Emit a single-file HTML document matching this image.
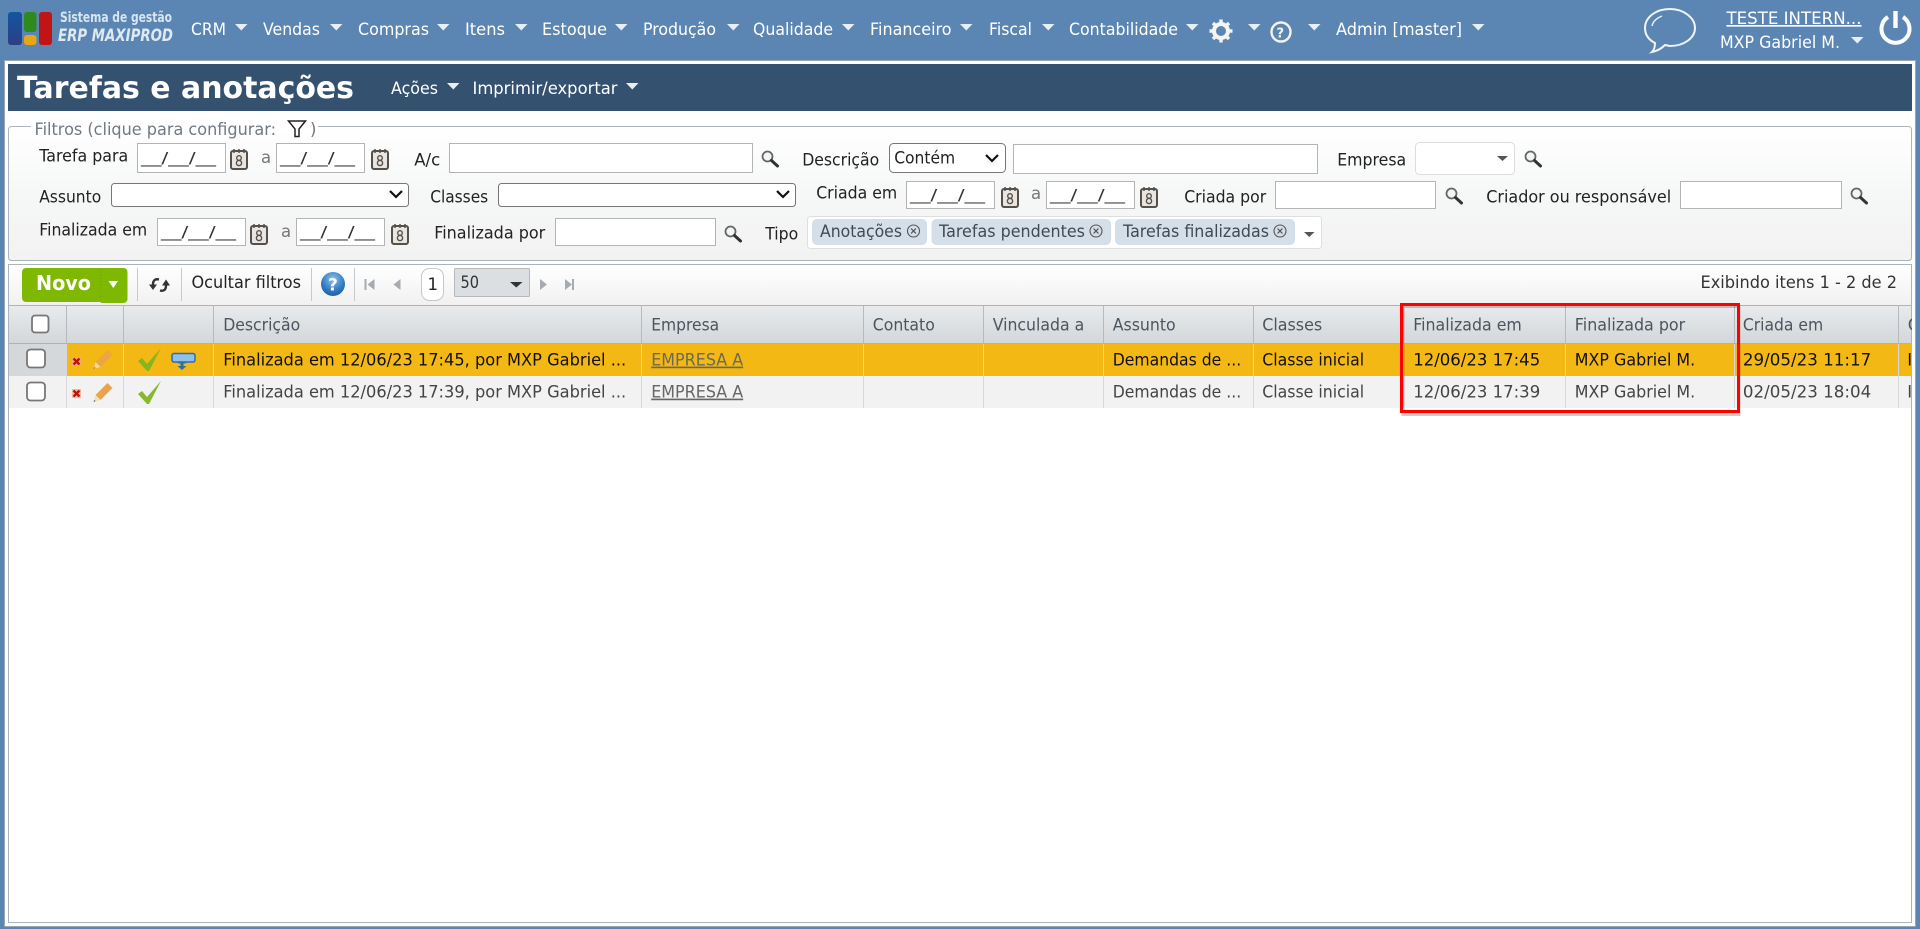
<!DOCTYPE html>
<html lang="pt-BR"><head><meta charset="utf-8"><title>Tarefas e anotações</title>
<style>
html,body{margin:0;padding:0;background:#fff;width:1920px;height:929px;overflow:hidden}
svg{display:block}
text{font-family:"DejaVu Sans","Liberation Sans",sans-serif;font-size:16.5px;fill:#333;white-space:pre}
.m{fill:#fff}
.l{fill:#222;transform:translate(-.8px,-.4px)}
.h{fill:#4b5560;transform:translate(-.8px,-.4px)}
.r1{fill:#111;transform:translate(-.8px,-.4px)}
.r2{fill:#444;transform:translate(-.8px,-.4px)}
.mask{fill:#333;font-size:15px;transform:translateX(-1px)}
</style></head><body>
<svg xmlns="http://www.w3.org/2000/svg" width="1920" height="929" viewBox="0 0 1920 929">
<defs>
<linearGradient id="gf" x1="0" y1="0" x2="0" y2="1"><stop offset="0" stop-color="#fff"/><stop offset=".5" stop-color="#f6f7f7"/><stop offset="1" stop-color="#f2f2f2"/></linearGradient>
<linearGradient id="gt" x1="0" y1="0" x2="0" y2="1"><stop offset="0" stop-color="#fff"/><stop offset="1" stop-color="#f1f1f1"/></linearGradient>
<linearGradient id="gh" x1="0" y1="0" x2="0" y2="1"><stop offset="0" stop-color="#e9ebed"/><stop offset="1" stop-color="#d3d7da"/></linearGradient>
<linearGradient id="lb" x1="0" y1="0" x2="0" y2="1"><stop offset="0" stop-color="#14559f"/><stop offset="1" stop-color="#2c3f86"/></linearGradient>
<radialGradient id="gq" cx=".5" cy=".3" r=".8"><stop offset="0" stop-color="#8fc0ea"/><stop offset=".6" stop-color="#2f79c2"/><stop offset="1" stop-color="#1a5596"/></radialGradient>
<path id="car" d="M0 0h12.500l-6.200 6.500z" fill="#e8eef4"/>
<g id="cal"><rect x="1" y="2" width="16" height="18" rx="2" fill="#e9e6e2" stroke="#55504c" stroke-width="2"/><path d="M4 0v4M9 0v4M14 0v4" stroke="#55504c" stroke-width="1.500"/><circle cx="9" cy="9" r="2.300" fill="none" stroke="#55504c" stroke-width="1.400"/><circle cx="9" cy="14" r="2.600" fill="none" stroke="#55504c" stroke-width="1.400"/></g>
<g id="sr"><circle cx="6.500" cy="6.500" r="5" fill="#f2f5f7" stroke="#666" stroke-width="1.800"/><path d="M10.500 10.500l6 5.500" stroke="#333" stroke-width="3" stroke-linecap="round"/></g>
<g id="xi"><rect x="0" y="0" width="9" height="9" fill="#e8b080" opacity=".75"/><path d="M1.500 1.500l6 6M7.500 1.500l-6 6" stroke="#c01212" stroke-width="2.400"/></g>
<g id="pen"><path d="M3 13L15 1l5 5L8 18z" fill="#e9a24d"/><path d="M3 13l5 5-7 2z" fill="#f6dfb9"/><path d="M1 20l2-1-1-1z" fill="#444"/></g>
<g id="chk"><path d="M0 13l4-3 5 6L23 0 11 23h-2z" fill="#7fb520" opacity=".95"/></g>
<g id="cc"><circle cx="0" cy="0" r="6" fill="none" stroke="#555" stroke-width="1.100"/><path d="M-2.400-2.400l4.800 4.800M2.400-2.400l-4.800 4.800" stroke="#555" stroke-width="1.200"/></g>
<path id="chev" d="M0 0l6 6 6-6" fill="none" stroke="#111" stroke-width="2.200"/>
<clipPath id="clipT"><rect x="8" y="300" width="1904" height="120"/></clipPath>
</defs>

<rect width="1920" height="929" fill="#5b86b3"/>
<rect x="4.500" y="60.500" width="1911" height="866" fill="#fff" stroke="#9aa6b0"/>

<!-- logo -->
<rect x="8" y="12" width="14" height="33" rx="3" fill="url(#lb)"/>
<rect x="24" y="12" width="12.500" height="20" rx="3" fill="#2e8a1e"/>
<rect x="24" y="35" width="12.500" height="10" rx="3" fill="#e5a718"/>
<rect x="39" y="12" width="13" height="33" rx="3" fill="#c11414"/>
<text x="60" y="22" textLength="112" lengthAdjust="spacingAndGlyphs" style="font-size:14px;font-weight:bold;fill:#d8e4ef">Sistema de gestão</text>
<text x="58" y="41" textLength="115" lengthAdjust="spacingAndGlyphs" style="font-size:16.500px;font-weight:bold;font-style:italic;fill:#dfe9f2">ERP MAXIPROD</text>

<!-- menu -->
<g>
<text class="m" x="191" y="35" textLength="35" lengthAdjust="spacingAndGlyphs">CRM</text><use href="#car" x="235" y="24"/>
<text class="m" x="263" y="35" textLength="57" lengthAdjust="spacingAndGlyphs">Vendas</text><use href="#car" x="330" y="24"/>
<text class="m" x="358" y="35" textLength="71" lengthAdjust="spacingAndGlyphs">Compras</text><use href="#car" x="437" y="24"/>
<text class="m" x="465" y="35" textLength="40" lengthAdjust="spacingAndGlyphs">Itens</text><use href="#car" x="515" y="24"/>
<text class="m" x="542" y="35" textLength="65" lengthAdjust="spacingAndGlyphs">Estoque</text><use href="#car" x="615" y="24"/>
<text class="m" x="643" y="35" textLength="73" lengthAdjust="spacingAndGlyphs">Produção</text><use href="#car" x="727" y="24"/>
<text class="m" x="753" y="35" textLength="80" lengthAdjust="spacingAndGlyphs">Qualidade</text><use href="#car" x="842" y="24"/>
<text class="m" x="870" y="35" textLength="81.500" lengthAdjust="spacingAndGlyphs">Financeiro</text><use href="#car" x="960" y="24"/>
<text class="m" x="989" y="35" textLength="43" lengthAdjust="spacingAndGlyphs">Fiscal</text><use href="#car" x="1042" y="24"/>
<text class="m" x="1069" y="35" textLength="109" lengthAdjust="spacingAndGlyphs">Contabilidade</text><use href="#car" x="1186" y="24"/>
<g transform="translate(1221 31)"><circle r="7" fill="none" stroke="#f4f4f0" stroke-width="4"/><path d="M0-11.500V-7M0 7V11.500M-11.500 0H-7M7 0H11.500M-8-8l3 3M5 5l3 3M8-8l-3 3M-5 5l-3 3" stroke="#f4f4f0" stroke-width="3.400"/></g>
<use href="#car" x="1248" y="24"/>
<circle cx="1281" cy="32" r="9.500" fill="none" stroke="#f2f2f2" stroke-width="2.400"/>
<text x="1276.500" y="37.500" style="font-size:13px;font-weight:bold;fill:#f2f2f2">?</text>
<use href="#car" x="1308" y="24"/>
<text class="m" x="1336" y="35" textLength="126" lengthAdjust="spacingAndGlyphs">Admin [master]</text><use href="#car" x="1472" y="24"/>
</g>
<!-- chat -->
<path d="M1670 9c-14 0-25 8-25 19 0 7 4 12 10 15 0 3-1 7-3 9 5-1 10-4 13-7 2 0 3 1 5 1 14 0 25-8 25-18s-11-19-25-19z" fill="none" stroke="#eef3f8" stroke-width="2"/>
<path d="M1652 26c1-5 5-8 10-10" fill="none" stroke="#eef3f8" stroke-width="1.400"/>
<text class="m" x="1726.500" y="24" textLength="135" lengthAdjust="spacingAndGlyphs" text-decoration="underline">TESTE INTERN...</text>
<text class="m" x="1720" y="48" textLength="120" lengthAdjust="spacingAndGlyphs">MXP Gabriel M.</text><use href="#car" x="1851" y="37"/>
<path d="M1888 17a14 14 0 1 0 15 0" fill="none" stroke="#fff" stroke-width="4"/><path d="M1895.500 11v17" stroke="#fff" stroke-width="4.400"/>

<!-- title bar -->
<rect x="8" y="64" width="1904" height="47" fill="#34526f"/>
<text x="17" y="98" textLength="337" lengthAdjust="spacingAndGlyphs" style="font-size:30px;font-weight:bold;fill:#fff">Tarefas e anotações</text>
<text class="m" x="391" y="94" textLength="47" lengthAdjust="spacingAndGlyphs">Ações</text><use href="#car" x="447" y="83"/>
<text class="m" x="472.500" y="94" textLength="145" lengthAdjust="spacingAndGlyphs">Imprimir/exportar</text><use href="#car" x="626" y="83"/>

<!-- filter panel -->
<rect x="8.500" y="126.500" width="1903" height="134" rx="3" fill="url(#gf)" stroke="#a9b4bd"/>
<rect x="31" y="120" width="287" height="14" fill="#fff"/>
<text x="34.500" y="135" textLength="241.500" lengthAdjust="spacingAndGlyphs" style="fill:#6f7a84">Filtros (clique para configurar:</text>
<path d="M288.500 121h17l-6.500 8v7.500h-4v-7.500z" fill="none" stroke="#222" stroke-width="1.500"/>
<text x="310" y="135" style="fill:#6f7a84">)</text>

<g fill="#fff" stroke="#b4b4b4">
<rect x="137.500" y="143.500" width="88" height="29"/><rect x="276.500" y="143.500" width="88" height="29"/>
<rect x="449.500" y="143.500" width="303" height="29"/>
<rect x="1013.500" y="144.500" width="304" height="29"/>
<rect x="906.500" y="181.500" width="88" height="27"/><rect x="1046.500" y="181.500" width="88" height="27"/>
<rect x="1275.500" y="181.500" width="160" height="27"/><rect x="1680.500" y="181.500" width="161" height="27"/>
<rect x="157.500" y="218.500" width="88" height="27"/><rect x="296.500" y="218.500" width="88" height="27"/>
<rect x="555.500" y="218.500" width="160" height="27"/>
</g>
<g fill="#fff" stroke="#767676">
<rect x="889.500" y="143.500" width="116" height="29" rx="4"/>
<rect x="111.500" y="183.500" width="297" height="23" rx="3"/>
<rect x="498.500" y="183.500" width="297" height="23" rx="3"/>
</g>
<rect x="1415.500" y="142.500" width="99" height="32" rx="4" fill="#fff" stroke="#dcdcdc"/>
<path d="M1497 156h11l-5.500 5z" fill="#555"/>
<use href="#chev" x="986" y="155"/><use href="#chev" x="390" y="191"/><use href="#chev" x="777" y="191"/>

<text class="l" x="40" y="162" textLength="89" lengthAdjust="spacingAndGlyphs">Tarefa para</text>
<text class="mask" x="142" y="163" textLength="75" lengthAdjust="spacingAndGlyphs">__/__/__</text>
<use href="#cal" x="230" y="149"/>
<text x="261" y="163" style="fill:#777">a</text>
<text class="mask" x="281" y="163" textLength="75" lengthAdjust="spacingAndGlyphs">__/__/__</text>
<use href="#cal" x="371" y="149"/>
<text class="l" x="415" y="166" textLength="26" lengthAdjust="spacingAndGlyphs">A/c</text>
<use href="#sr" x="761" y="150"/>
<text class="l" x="803" y="166" textLength="77" lengthAdjust="spacingAndGlyphs">Descrição</text>
<text class="l" x="895" y="164" textLength="61" lengthAdjust="spacingAndGlyphs">Contém</text>
<text class="l" x="1338" y="166" textLength="69" lengthAdjust="spacingAndGlyphs">Empresa</text>
<use href="#sr" x="1524" y="150"/>

<text class="l" x="40" y="203" textLength="62" lengthAdjust="spacingAndGlyphs">Assunto</text>
<text class="l" x="431" y="203" textLength="58" lengthAdjust="spacingAndGlyphs">Classes</text>
<text class="l" x="817" y="199" textLength="81" lengthAdjust="spacingAndGlyphs">Criada em</text>
<text class="mask" x="911" y="200" textLength="75" lengthAdjust="spacingAndGlyphs">__/__/__</text>
<use href="#cal" x="1001" y="187"/>
<text x="1031" y="199" style="fill:#777">a</text>
<text class="mask" x="1051" y="200" textLength="75" lengthAdjust="spacingAndGlyphs">__/__/__</text>
<use href="#cal" x="1140" y="187"/>
<text class="l" x="1185" y="203" textLength="82" lengthAdjust="spacingAndGlyphs">Criada por</text>
<use href="#sr" x="1445" y="187"/>
<text class="l" x="1487" y="203" textLength="185" lengthAdjust="spacingAndGlyphs">Criador ou responsável</text>
<use href="#sr" x="1850" y="187"/>

<text class="l" x="40" y="236" textLength="108" lengthAdjust="spacingAndGlyphs">Finalizada em</text>
<text class="mask" x="162" y="237" textLength="75" lengthAdjust="spacingAndGlyphs">__/__/__</text>
<use href="#cal" x="250" y="224"/>
<text x="281" y="237" style="fill:#777">a</text>
<text class="mask" x="301" y="237" textLength="75" lengthAdjust="spacingAndGlyphs">__/__/__</text>
<use href="#cal" x="391" y="224"/>
<text class="l" x="435" y="239" textLength="111" lengthAdjust="spacingAndGlyphs">Finalizada por</text>
<use href="#sr" x="724" y="225"/>
<text class="l" x="766" y="240" textLength="33" lengthAdjust="spacingAndGlyphs">Tipo</text>
<rect x="807.500" y="216.500" width="514" height="32" rx="3" fill="#fff" stroke="#dfdfdf"/>
<g fill="#d4dfea"><rect x="812" y="219" width="115" height="26" rx="5"/><rect x="931.500" y="219" width="179.500" height="26" rx="5"/><rect x="1115" y="219" width="180" height="26" rx="5"/></g>
<text x="820" y="237" textLength="82" lengthAdjust="spacingAndGlyphs" style="fill:#3f4a55">Anotações</text><use href="#cc" x="913.500" y="231"/>
<text x="939" y="237" textLength="146" lengthAdjust="spacingAndGlyphs" style="fill:#3f4a55">Tarefas pendentes</text><use href="#cc" x="1096" y="231"/>
<text x="1123" y="237" textLength="146" lengthAdjust="spacingAndGlyphs" style="fill:#3f4a55">Tarefas finalizadas</text><use href="#cc" x="1280" y="231"/>
<path d="M1304 232h10.500l-5.200 5z" fill="#555"/>

<!-- grid container -->
<rect x="8.500" y="264.500" width="1903" height="658" fill="#fff" stroke="#a9b4bd"/>
<rect x="9" y="265" width="1902" height="40" fill="url(#gt)"/>
<path d="M22 272a4 4 0 0 1 4-4h97.500a4 4 0 0 1 4 4v27a4 4 0 0 1-4 4h-22a1 1 0 0 1-1-1h-74.500a4 4 0 0 1-4-4z" fill="#7fb800"/>
<path d="M100.500 269v33" stroke="#74a800" stroke-dasharray="1 2"/>
<text x="36" y="290" textLength="55" lengthAdjust="spacingAndGlyphs" style="font-size:20px;font-weight:bold;fill:#fff">Novo</text>
<path d="M108.500 281h9.500l-4.700 7z" fill="#fff"/>
<path d="M137.500 268v33M181.500 268v33M311.500 268v33M354.500 268v33" stroke="#c5cacf"/>
<g fill="none" stroke="#333" stroke-width="2.400"><path d="M159 279.500c-4-1-6 1-6 5v1.500"/><path d="M160 290.500c4 1 6-1 6-5v-1.500"/></g>
<path d="M149 284.500h8l-4 5.500zM162 285.500h8l-4-6z" fill="#333"/>
<text x="191.500" y="288" textLength="109.500" lengthAdjust="spacingAndGlyphs" style="fill:#222">Ocultar filtros</text>
<circle cx="333" cy="284" r="12" fill="url(#gq)"/>
<text x="328" y="290.500" style="font-size:17px;font-weight:bold;fill:#fff">?</text>
<g fill="#a5abb0"><path d="M364.500 279h2v11h-2zM374.500 279v11l-7-5.500zM400.500 279v11l-7-5.500zM540 279v11l7-5.500zM565 279v11l7-5.500zM572 279h2v11h-2z"/></g>
<rect x="421.500" y="268.500" width="22" height="32" rx="8" fill="#fff" stroke="#c8c8c8"/>
<text x="427.500" y="290" style="fill:#222">1</text>
<rect x="454.500" y="268.500" width="75" height="28" rx="1" fill="#dcdfe2" stroke="#b5b9bd"/>
<text x="460.500" y="288" textLength="18.500" lengthAdjust="spacingAndGlyphs" style="fill:#333">50</text>
<path d="M510 282h12.500l-6.200 5.500z" fill="#333"/>
<text x="1700.500" y="288" textLength="196.500" lengthAdjust="spacingAndGlyphs" style="fill:#333">Exibindo itens 1 - 2 de 2</text>

<!-- table -->
<g clip-path="url(#clipT)">
<rect x="9" y="305" width="1902" height="38" fill="url(#gh)"/>
<rect x="66" y="344" width="1846" height="32" fill="#f4b815"/>
<rect x="9" y="344" width="57" height="32" fill="#d5d8db"/>
<rect x="9" y="376" width="1902" height="32" fill="#f2f2f2"/>
<path d="M8 305.500h1904M8 343.500h1904" stroke="#a9b4bd"/>
<g stroke="#b3bac1"><path d="M66.500 305v38M123.500 305v38M213.500 305v38M641.500 305v38M863.500 305v38M983.500 305v38M1103.500 305v38M1253.500 305v38M1403.500 305v38M1565.500 305v38M1734.500 305v38M1898.500 305v38"/></g>
<g stroke="#d6d9dc"><path d="M66.500 344v64M123.500 344v64M213.500 344v64M641.500 344v64M863.500 344v64M983.500 344v64M1103.500 344v64M1253.500 344v64M1403.500 344v64M1565.500 344v64M1734.500 344v64M1898.500 344v64"/></g>

<rect x="32" y="315.500" width="16.500" height="17" rx="3" fill="#fff" stroke="#777" stroke-width="1.800"/>
<rect x="27" y="349.500" width="18" height="18" rx="3.500" fill="#fff" stroke="#777" stroke-width="1.800"/>
<rect x="27" y="382.500" width="18" height="18" rx="3.500" fill="#fff" stroke="#777" stroke-width="1.800"/>

<g class="hd">
<text class="h" x="224" y="331" textLength="77" lengthAdjust="spacingAndGlyphs">Descrição</text>
<text class="h" x="652" y="331" textLength="68" lengthAdjust="spacingAndGlyphs">Empresa</text>
<text class="h" x="873.600" y="331" textLength="62" lengthAdjust="spacingAndGlyphs">Contato</text>
<text class="h" x="993.500" y="331" textLength="91.500" lengthAdjust="spacingAndGlyphs">Vinculada a</text>
<text class="h" x="1113.500" y="331" textLength="63" lengthAdjust="spacingAndGlyphs">Assunto</text>
<text class="h" x="1263" y="331" textLength="60" lengthAdjust="spacingAndGlyphs">Classes</text>
<text class="h" x="1414" y="331" textLength="108.600" lengthAdjust="spacingAndGlyphs">Finalizada em</text>
<text class="h" x="1575.600" y="331" textLength="110.400" lengthAdjust="spacingAndGlyphs">Finalizada por</text>
<text class="h" x="1743.700" y="331" textLength="80.300" lengthAdjust="spacingAndGlyphs">Criada em</text>
<text class="h" x="1908.500" y="331">C</text>
</g>

<use href="#xi" x="72" y="357"/><use href="#pen" x="92.500" y="349" opacity=".8"/><use href="#chk" x="138" y="348"/>
<g><rect x="172" y="353.500" width="23" height="8.500" rx="2" fill="#8fc0ea" stroke="#2d6da8" stroke-width="1.500"/><path d="M176 362h12l-3 1.500h-1.500v2.500h3l-4.500 4-4.500-4h3v-2.500h-1.500z" fill="#2d6da8"/></g>
<use href="#xi" x="72" y="389"/><use href="#pen" x="92.500" y="382"/><use href="#chk" x="138" y="381"/>

<text class="r1" x="224" y="366" textLength="403" lengthAdjust="spacingAndGlyphs">Finalizada em 12/06/23 17:45, por MXP Gabriel ...</text>
<text x="651.200" y="365.600" textLength="92" lengthAdjust="spacingAndGlyphs" text-decoration="underline" style="fill:#6a6a55">EMPRESA A</text>
<text class="r1" x="1113.500" y="366" textLength="128.500" lengthAdjust="spacingAndGlyphs">Demandas de ...</text>
<text class="r1" x="1263" y="366" textLength="102" lengthAdjust="spacingAndGlyphs">Classe inicial</text>
<text class="r1" x="1414" y="366" textLength="127" lengthAdjust="spacingAndGlyphs">12/06/23 17:45</text>
<text class="r1" x="1575.600" y="366" textLength="120.400" lengthAdjust="spacingAndGlyphs">MXP Gabriel M.</text>
<text class="r1" x="1743.700" y="366" textLength="128.300" lengthAdjust="spacingAndGlyphs">29/05/23 11:17</text>
<text class="r1" x="1908" y="366">I</text>

<text class="r2" x="224" y="398" textLength="403" lengthAdjust="spacingAndGlyphs">Finalizada em 12/06/23 17:39, por MXP Gabriel ...</text>
<text x="651.200" y="397.600" textLength="92" lengthAdjust="spacingAndGlyphs" text-decoration="underline" style="fill:#666">EMPRESA A</text>
<text class="r2" x="1113.500" y="398" textLength="128.500" lengthAdjust="spacingAndGlyphs">Demandas de ...</text>
<text class="r2" x="1263" y="398" textLength="102" lengthAdjust="spacingAndGlyphs">Classe inicial</text>
<text class="r2" x="1414" y="398" textLength="127" lengthAdjust="spacingAndGlyphs">12/06/23 17:39</text>
<text class="r2" x="1575.600" y="398" textLength="120.400" lengthAdjust="spacingAndGlyphs">MXP Gabriel M.</text>
<text class="r2" x="1743.700" y="398" textLength="128.300" lengthAdjust="spacingAndGlyphs">02/05/23 18:04</text>
<text class="r2" x="1908" y="398">I</text>
</g>

<!-- highlight -->
<rect x="1403" y="306.500" width="336" height="108" fill="none" stroke="#000" stroke-opacity=".2" stroke-width="3"/>
<rect x="1401.500" y="304.500" width="337" height="107" fill="none" stroke="#f00" stroke-width="3"/>
</svg>
</body></html>
